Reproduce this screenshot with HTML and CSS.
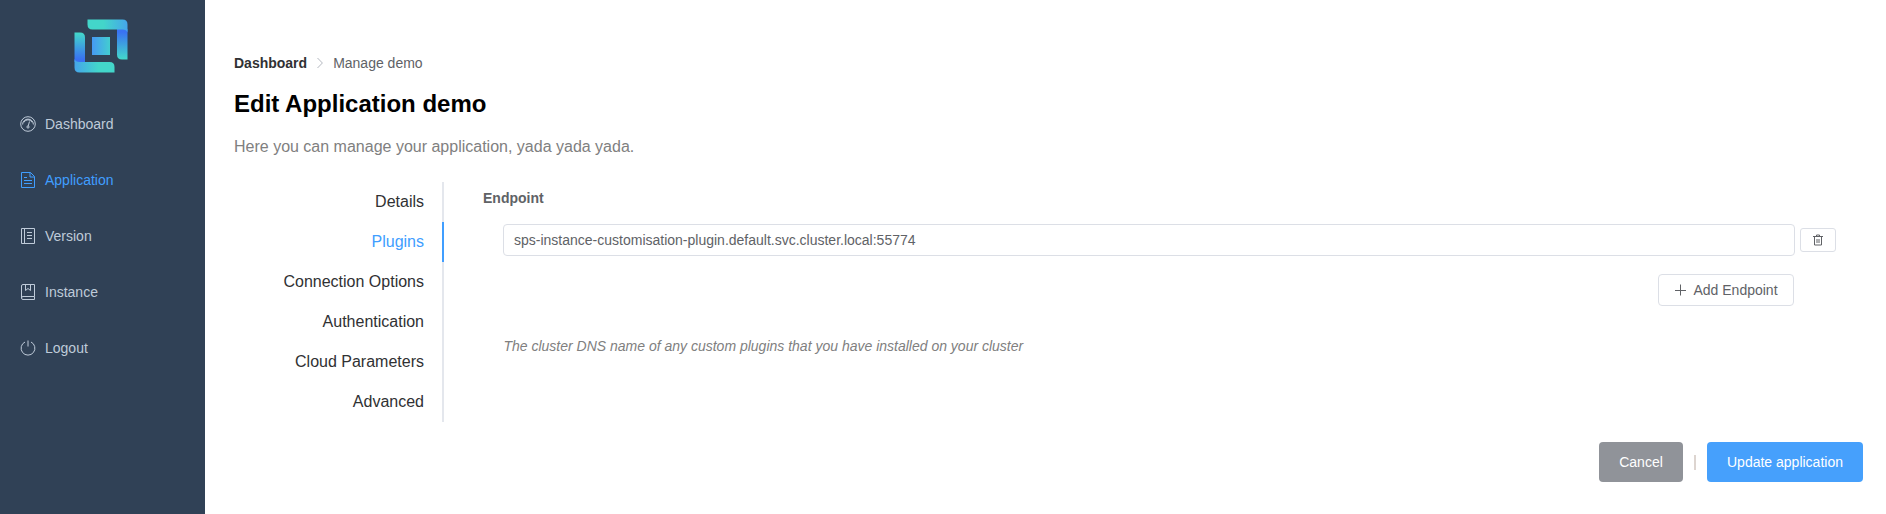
FILE: index.html
```html
<!DOCTYPE html>
<html lang="en">
<head>
<meta charset="utf-8">
<title>Edit Application demo</title>
<link rel="stylesheet" href="styles.css">
</head>
<body>
<div class="app">
  <aside class="sidebar">
    <svg class="logo" viewBox="0 0 54 54">
      <defs>
        <linearGradient id="top" x1="0" x2="1" y1="0" y2="0"><stop offset=".4" stop-color="#43d6ca"/><stop offset="1" stop-color="#45a5ea"/></linearGradient>
        <linearGradient id="bottom" x1="0" x2="1" y1="0" y2="0"><stop offset="0" stop-color="#45a5ea"/><stop offset=".6" stop-color="#43d6ca"/></linearGradient>
        <linearGradient id="right" x1="0" x2="0" y1="0" y2="1"><stop offset="0.100" stop-color="#3972f2"/><stop offset="1" stop-color="#43d9ca"/></linearGradient>
        <linearGradient id="left" x1="0" x2="0" y1="0" y2="1"><stop offset="0" stop-color="#43d9ca"/><stop offset=".9" stop-color="#3972f2"/></linearGradient>
        <linearGradient id="core" x1="0" x2="1" y1="0" y2="0"><stop offset="0" stop-color="#4699f4"/><stop offset="1" stop-color="#43cdd0"/></linearGradient>
      </defs>
      <path fill="url(#right)" d="M43 10h10.500v30.500H48q-5 0-5-5z"/>
      <path fill="url(#top)" d="M13.500 .5h35q5 0 5 5v8q-1-3-5-3h-30q-5 0-5-5z"/>
      <path fill="url(#left)" d="M.5 13.500H6q5 0 5 5V43H.5z"/>
      <path fill="url(#bottom)" d="M.5 40q1 3 5 3h30q5 0 5 5v5.500h-35q-5 0-5-5z"/>
      <path fill="url(#core)" d="M18 18h18v18H18z"/>
    </svg>
    <nav class="menu">
      <a class="menu-item"><svg class="icon" viewBox="0 0 16 16"><circle cx="8" cy="8" r="7.300"/><path d="M2.600 8.500A5.400 5.400 0 0 1 13.400 8.500M3.800 6.500A4.600 4.600 0 0 1 12.200 6.500M9.500 5.500 8.200 10"/><circle cx="8" cy="11" r="1.100"/></svg>Dashboard</a>
      <a class="menu-item active"><svg class="icon" viewBox="0 0 16 16"><path d="M10.500 .5h-9v15h13V4.500zM10 .5v4.500h4.500M4 5.500h3M4 8.500h8M4 11.500h8"/></svg>Application</a>
      <a class="menu-item"><svg class="icon" viewBox="0 0 16 16"><path d="M1.500 .5h13v15h-13zM4.500 .5v15M7 4.500h5M7 7.500h5M7 10.500h5"/></svg>Version</a>
      <a class="menu-item"><svg class="icon" viewBox="0 0 16 16"><path d="M14.500 12.500V.5H3Q1.500 .5 1.500 2v12q0 1.500 1.500 1.500h11.500v-3H3Q1.500 12.500 1.500 14M5.500 .5v6L8 4.500l2.500 2v-6"/></svg>Instance</a>
      <a class="menu-item"><svg class="icon" viewBox="0 0 16 16"><path d="M8 .5v6M5 2a6.900 6.900 0 1 0 6 0"/></svg>Logout</a>
    </nav>
  </aside>
  <main class="main">
    <div class="breadcrumb"><b>Dashboard</b><svg class="chevron" viewBox="0 0 6 10"><path d="M.5 0 5.400 5 .5 10"/></svg><span>Manage demo</span></div>
    <h1 class="title">Edit Application demo</h1>
    <p class="subtitle">Here you can manage your application, yada yada yada.</p>
    <div class="panel">
      <div class="tabs">
        <div class="tab">Details</div>
        <div class="tab selected">Plugins</div>
        <div class="tab">Connection Options</div>
        <div class="tab">Authentication</div>
        <div class="tab">Cloud Parameters</div>
        <div class="tab">Advanced</div>
      </div>
      <div class="content">
        <div class="label">Endpoint</div>
        <div class="row">
          <div class="input">sps-instance-customisation-plugin.default.svc.cluster.local:55774</div>
          <div class="button remove"><svg class="trash" viewBox="0 0 12 12"><path d="M1 2.500h10M4.500 2.500v-1.500h3v1.500M2.500 2.500v8.500h7V2.500M5 5v4M7 5v4"/></svg></div>
        </div>
        <div class="add-row"><div class="button add"><svg class="plus" viewBox="0 0 12 12"><path d="M6.500 .5v11M1 6.500h11"/></svg>Add Endpoint</div></div>
        <p class="hint">The cluster DNS name of any custom plugins that you have installed on your cluster</p>
      </div>
    </div>
    <div class="actions"><div class="action cancel">Cancel</div><span class="divider"></span><div class="action update">Update application</div></div>
  </main>
</div>
</body>
</html>
```
FILE: styles.css
```css
* { box-sizing: border-box; }
body { margin: 0; font-family: "Liberation Sans", Arial, sans-serif; font-size: 14px; background: #fff; }
.app { display: flex; height: 514px; overflow: hidden; }
.sidebar { width: 205px; flex: none; background: #304156; }
.logo { display: block; width: 54px; height: 54px; margin: 19px 0 0 74px; }
.menu { margin-top: 23px; }
.menu-item { display: flex; align-items: center; height: 56px; padding-left: 20px; gap: 9px; color: #bfcbd9; }
.menu-item.active { color: #409eff; }
.icon { width: 16px; height: 16px; }
.icon, .chevron, .trash, .plus { fill: none; stroke: currentColor; stroke-width: 1; flex: none; }
.main { flex: 1; min-width: 0; padding: 55px 23px 0 29px; }
.breadcrumb { display: flex; align-items: center; height: 16px; color: #606266; }
.breadcrumb b { color: #303133; }
.chevron { width: 6px; height: 10px; margin: 0 10px; color: #b4b8c0; overflow: visible; }
.title { margin: 19px 0 0; font-size: 24px; line-height: 28px; color: #000; }
.subtitle { margin: 20px 0 0; font-size: 16px; line-height: 18px; color: #808080; }
.panel { display: flex; margin-top: 26px; }
.tabs { width: 210px; flex: none; }
.tab { height: 40px; line-height: 40px; padding-right: 18px; text-align: right; font-size: 16px; color: #303133; border-right: 2px solid #e4e7ed; }
.tab.selected { color: #409eff; border-color: #409eff; }
.content { flex: 1; padding: 8px 27px 0 39px; color: #606266; }
.label { font-weight: bold; line-height: 16px; }
.row { display: flex; align-items: center; gap: 5px; margin: 18px 0 0 20px; }
.input { flex: 1; height: 32px; line-height: 30px; padding: 0 10px; border: 1px solid #dcdfe6; border-radius: 4px; }
.button { display: flex; align-items: center; justify-content: center; border: 1px solid #dcdfe6; border-radius: 4px; }
.remove { width: 36px; height: 24px; border-radius: 3px; }
.trash { width: 12px; height: 12px; }
.add-row { display: flex; justify-content: flex-end; margin: 18px 42px 0 0; }
.add { width: 136px; height: 32px; gap: 7px; }
.plus { width: 12px; height: 12px; overflow: visible; }
.hint { margin: 32px 0 0 20.4px; line-height: 16px; font-style: italic; color: #808080; }
.actions { display: flex; justify-content: flex-end; align-items: center; margin-top: 20px; }
.action { height: 40px; line-height: 40px; text-align: center; color: #fff; border-radius: 4px; }
.cancel { width: 84px; background: #909399; }
.update { width: 156px; background: #46a0fc; }
.divider { width: 2px; height: 15px; margin: 0 11px; background: #ddd5d0; }
```
